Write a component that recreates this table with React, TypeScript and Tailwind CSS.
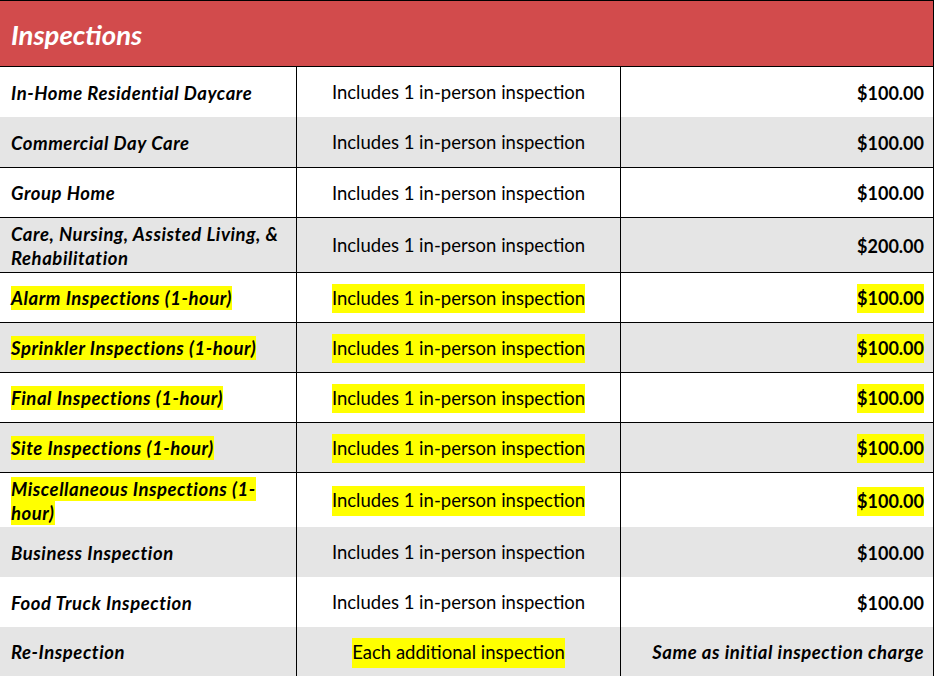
const rows = [
  { name: ["In-Home Residential Daycare"], h: "h-[50px]", price: "$100.00" },
  { name: ["Commercial Day Care"], h: "h-[50px]", price: "$100.00", gray: true },
  { name: ["Group Home"], h: "h-[50px]", price: "$100.00", line: true },
  { name: ["Care, Nursing, Assisted Living, &", "Rehabilitation"], h: "h-[55px]", price: "$200.00", gray: true, line: true },
  { name: ["Alarm Inspections (1-hour)"], h: "h-[50px]", price: "$100.00", line: true, hl: true },
  { name: ["Sprinkler Inspections (1-hour)"], h: "h-[50px]", price: "$100.00", gray: true, line: true, hl: true },
  { name: ["Final Inspections (1-hour)"], h: "h-[50px]", price: "$100.00", line: true, hl: true },
  { name: ["Site Inspections (1-hour)"], h: "h-[50px]", price: "$100.00", gray: true, line: true, hl: true },
  { name: ["Miscellaneous Inspections (1-", "hour)"], h: "h-[55px]", price: "$100.00", line: true, hl: true },
  { name: ["Business Inspection"], h: "h-[50px]", price: "$100.00", gray: true },
  { name: ["Food Truck Inspection"], h: "h-[50px]", price: "$100.00" },
];

const Mark = ({ on, children }: { on?: boolean; children: React.ReactNode }) =>
  on ? <span className="bg-[#ffff00] py-[1px] [box-decoration-break:clone]">{children}</span> : <>{children}</>;

export default function App() {
  return (
    <div className="w-[935px] bg-white text-black font-['Lato','Liberation_Sans',sans-serif] text-[18.5px]">
      <div className="w-[934px] border-t border-b border-r border-black bg-[#d24b4c] h-[67px] flex items-center pl-[11px]">
        <span className="text-white font-bold italic text-[27.5px] mt-[2px]">Inspections</span>
      </div>

      {rows.map((r, i) => (
        <div
          key={i}
          className={`w-[934px] grid grid-cols-[296px_324px_314px] border-r border-black ${r.h} ${r.gray ? "bg-[#e5e5e5]" : "bg-white"} ${r.line ? "border-t" : ""}`}
        >
          <div className="flex items-center pl-[11px] pt-[1px] font-bold italic leading-[24px] tracking-[0.55px] whitespace-nowrap">
            <span>
              <Mark on={r.hl}>
                {r.name.map((n, j) => (
                  <span key={j}>
                    {j > 0 && <br />}
                    {n}
                  </span>
                ))}
              </Mark>
            </span>
          </div>
          <div className="flex items-center justify-center pt-[2px] border-l border-black">
            <Mark on={r.hl}>Includes 1 in-person inspection</Mark>
          </div>
          <div className="flex items-center justify-end pr-[10px] pt-[2px] border-l border-black font-bold text-[18px]">
            <Mark on={r.hl}>{r.price}</Mark>
          </div>
        </div>
      ))}

      <div className="w-[934px] grid grid-cols-[296px_324px_314px] border-r border-black h-[50px] bg-[#e5e5e5]">
        <div className="flex items-center pl-[11px] pt-[2px] font-bold italic tracking-[0.55px]">Re-Inspection</div>
        <div className="flex items-center justify-center pt-[2px] border-l border-black">
          <span className="bg-[#ffff00] py-[1px]">Each additional inspection</span>
        </div>
        <div className="flex items-center justify-end pr-[10px] pt-[2px] border-l border-black font-bold italic tracking-[0.55px]">
          Same as initial inspection charge
        </div>
      </div>
    </div>
  );
}
